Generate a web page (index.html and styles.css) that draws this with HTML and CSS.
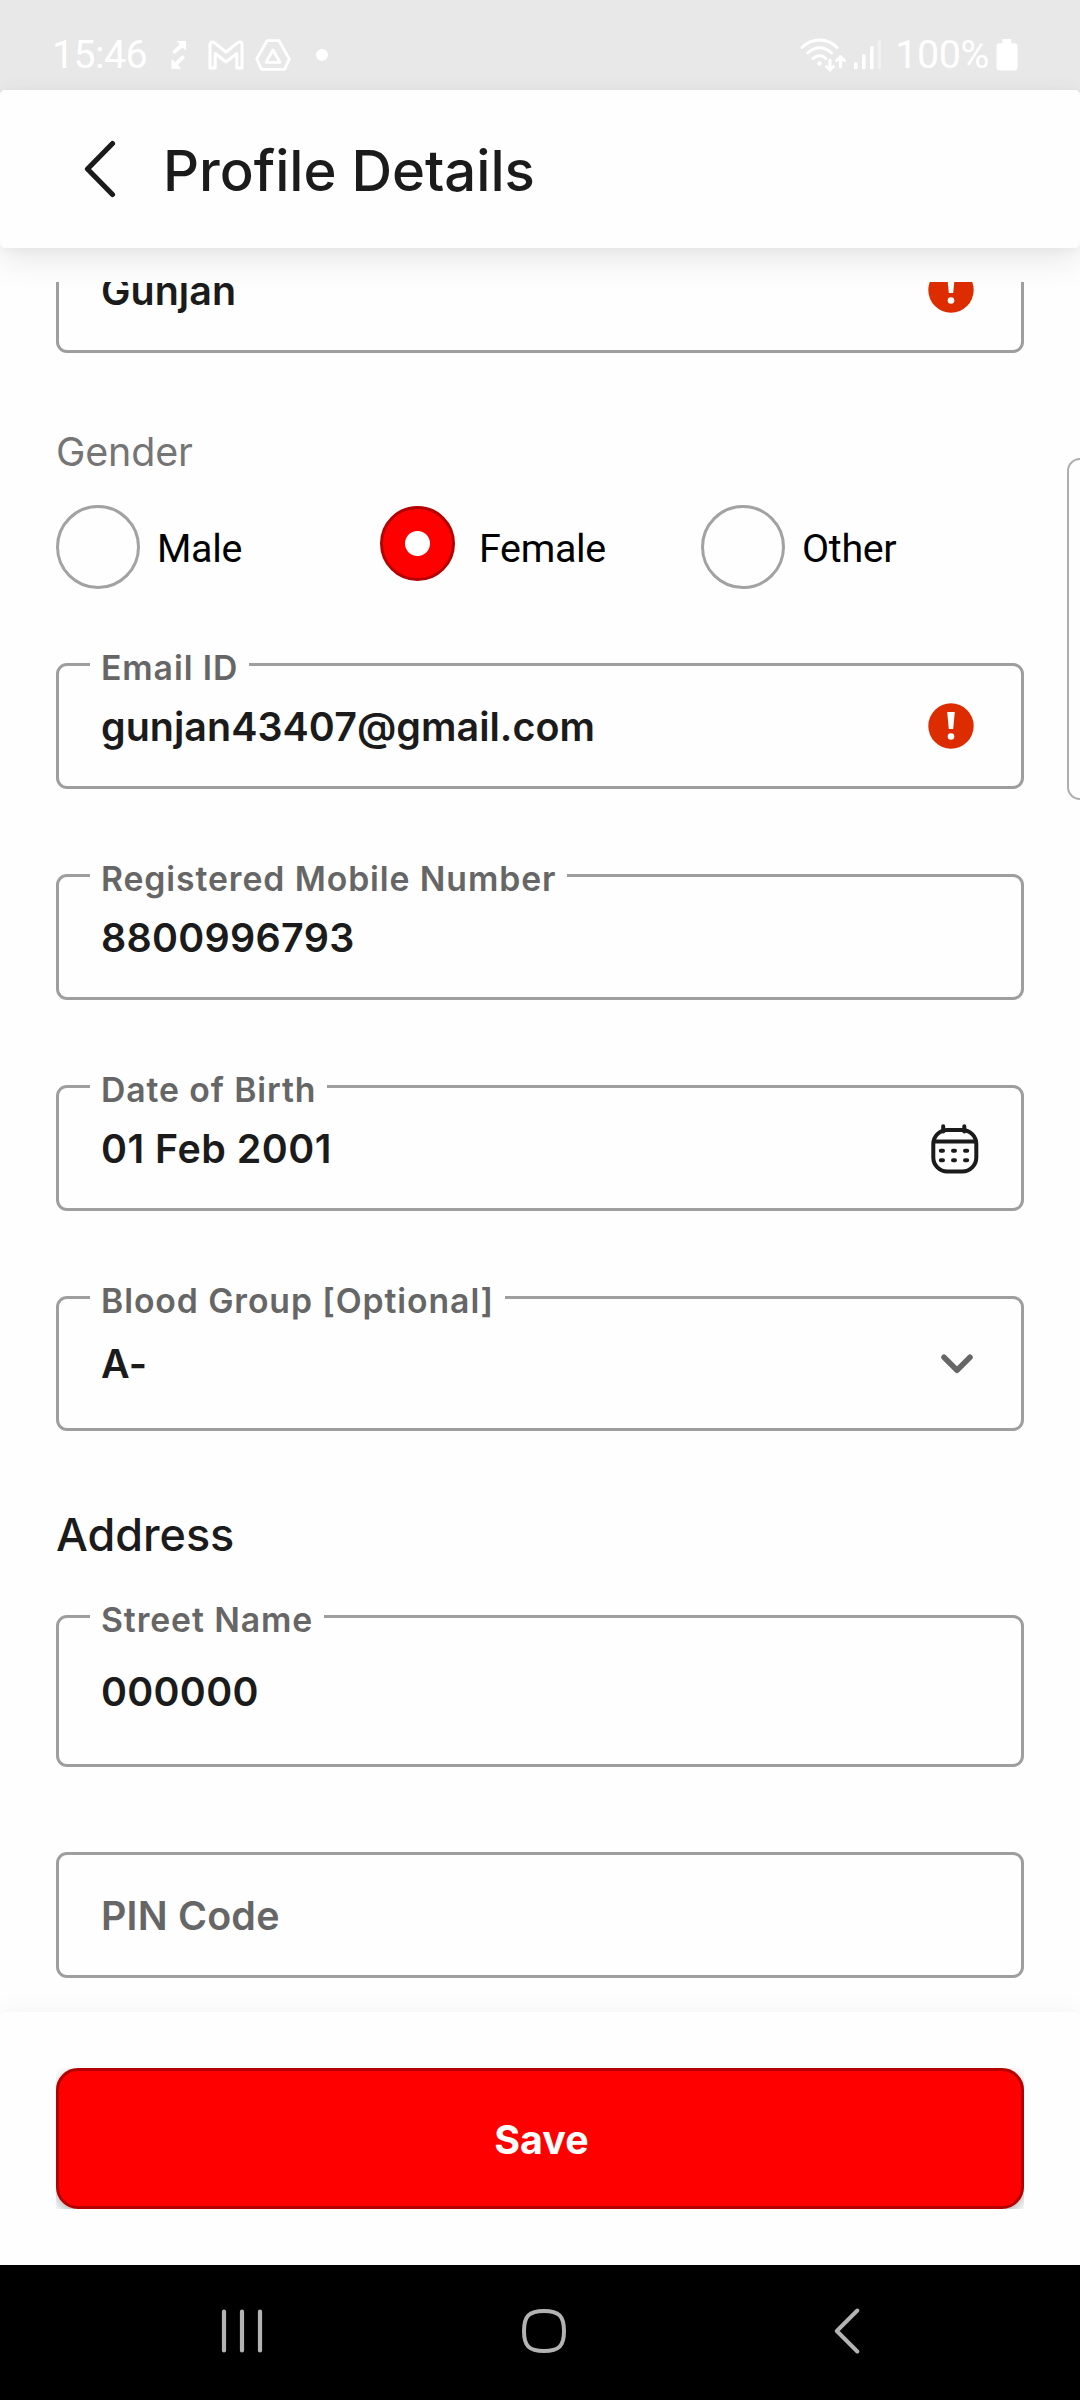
FILE: index.html
```html
<!DOCTYPE html>
<html lang="en">
<head>
<meta charset="utf-8">
<title>Profile Details</title>
<link rel="stylesheet" href="styles.css">
</head>
<body>
<div class="screen">
  <div class="status-bar">
    <div class="status-left">
      <span class="status-text clock">15:46</span>
      <svg class="icon-sync" width="16" height="30" viewBox="0 0 16 30"><path d="M5.500 1H15V10.500L11.700 7.400L3.500 14L1.300 11.800L8.500 4.200Z M12.200 15.500L14 17.500L7 25L10 28.500V29H.5V19L4 22.300L10.800 15.500Z" fill="#fff"/></svg>
      <svg class="icon-mail" width="36" height="30" viewBox="0 0 36 30"><path d="M2 28V4.500C2 1.800 4.500 1.200 6.500 2.800L18 12L29.500 2.800C31.500 1.200 34 1.800 34 4.500V28H28.800V13.500L18 22L7.200 13.500V28Z" fill="none" stroke="#fff" stroke-width="3" stroke-linejoin="round"/></svg>
      <svg class="icon-drive" width="36" height="32" viewBox="0 0 36 32"><path d="M12 1.700H24L34.300 20L29.500 30.300H6.500L1.700 20Z M18 11L25 23.300H11Z" fill="none" stroke="#fff" stroke-width="2.800" stroke-linejoin="round"/></svg>
      <span class="more-dot"></span>
    </div>
    <div class="status-right">
      <svg class="icon-wifi" width="46" height="36" viewBox="0 0 46 36"><g fill="none" stroke="#fff" stroke-width="3" stroke-linecap="round"><path d="M2 10.500C12 .6 27 .6 37 10.500"/><path d="M7.500 16C15 9 24 9 31.500 16"/><path d="M13 21.500C17 17.800 22 17.800 26 21.500"/><path d="M30 23V32.500M26.500 29.500L30 33L33.500 29.500M40.500 30V21M36.500 23.500L40.500 19.700L44.500 23.500"/></g><circle cx="19.500" cy="26.500" r="2.200" fill="#fff"/></svg>
      <svg class="icon-signal" width="28" height="30" viewBox="0 0 28 30"><g fill="#fff"><rect x="0" y="22" width="3.600" height="7.500" rx="1.800"/><rect x="8" y="14" width="3.600" height="15.500" rx="1.800"/><rect x="16" y="6" width="3.600" height="23.500" rx="1.800"/><rect x="23.500" y="0" width="3.600" height="29.500" rx="1.800" opacity=".4"/></g></svg>
      <span class="status-text battery-level">100%</span>
      <svg class="icon-battery" width="22" height="32" viewBox="0 0 22 32"><path d="M6.300 0H15.300V4.300H18.500Q21.500 4.300 21.500 7.500V28.500Q21.500 31.500 18.500 31.500H3.500Q.5 31.500 .5 28.500V7.500Q.5 4.300 3.500 4.300H6.300Z" fill="#fff"/></svg>
    </div>
  </div>

  <header class="app-bar">
    <svg class="icon-back" width="32" height="58" viewBox="0 0 32 58"><path d="M28.500 3.500L3.500 29L28.500 54.500" fill="none" stroke="#1b1b1b" stroke-width="5.200" stroke-linecap="round" stroke-linejoin="round"/></svg>
    <h1 class="title">Profile Details</h1>
  </header>

  <main class="scroller">
    <div class="form">
      <div class="field">
        <span class="value">Gunjan</span>
        <svg class="icon-error" width="46" height="46" viewBox="0 0 46 46"><circle cx="23" cy="23" r="22.700" fill="#dd2c00"/><path d="M19.200 9H26.800L25.200 26H20.800Z" fill="#fff"/><circle cx="23" cy="33.500" r="3.300" fill="#fff"/></svg>
      </div>

      <p class="group-label">Gender</p>
      <div class="radios">
        <label class="option"><span class="radio"></span><span class="option-text">Male</span></label>
        <label class="option option-on"><span class="radio radio-on"></span><span class="option-text">Female</span></label>
        <label class="option"><span class="radio"></span><span class="option-text">Other</span></label>
      </div>

      <div class="field">
        <span class="label">Email ID</span>
        <span class="value">gunjan43407@gmail.com</span>
        <svg class="icon-error" width="46" height="46" viewBox="0 0 46 46"><circle cx="23" cy="23" r="22.700" fill="#dd2c00"/><path d="M19.200 9H26.800L25.200 26H20.800Z" fill="#fff"/><circle cx="23" cy="33.500" r="3.300" fill="#fff"/></svg>
      </div>
      <div class="field spaced">
        <span class="label">Registered Mobile Number</span>
        <span class="value value-number">8800996793</span>
      </div>
      <div class="field spaced">
        <span class="label">Date of Birth</span>
        <span class="value value-date">01 Feb 2001</span>
        <svg class="icon-calendar" width="48" height="50" viewBox="0 0 48 50"><g fill="none" stroke="#1b1b1b" stroke-width="4" stroke-linecap="round"><rect x="2.300" y="6" width="43" height="41.500" rx="14"/><path d="M3 17.500H45M12.200 2.200V7.500M33.300 2.200V7.500"/><path d="M9.800 26.800H12M22 26.800H24M34 26.800H36.200M9.800 36.300H12M22 36.300H24M34 36.300H36.200"/></g></svg>
      </div>
      <div class="field field-select spaced">
        <span class="label">Blood Group [Optional]</span>
        <span class="value value-number">A-</span>
        <svg class="icon-chevron" width="32" height="20" viewBox="0 0 32 20"><path d="M3 3.200L16 16.300L29 3.200" fill="none" stroke="#666" stroke-width="5.500" stroke-linecap="round" stroke-linejoin="round"/></svg>
      </div>

      <h2 class="section">Address</h2>
      <div class="field field-street">
        <span class="label">Street Name</span>
        <span class="value value-number">000000</span>
      </div>
      <div class="field spaced">
        <span class="value value-empty">PIN Code</span>
      </div>
    </div>
  </main>

  <div class="edge-handle"></div>

  <footer class="action-bar">
    <div class="button-clip"><button class="save" type="button">Save</button></div>
  </footer>

  <nav class="nav-bar">
    <svg class="icon-recents" width="42" height="44" viewBox="0 0 42 44"><path d="M3 2.500V41.500M21 2.500V41.500M39 2.500V41.500" stroke="#b3b3b3" stroke-width="4.200" stroke-linecap="round"/></svg>
    <svg class="icon-home" width="44" height="44" viewBox="0 0 44 44"><path d="M22 2C37 2 42 7 42 22S37 42 22 42S2 37 2 22S7 2 22 2Z" fill="none" stroke="#b3b3b3" stroke-width="4"/></svg>
    <svg class="icon-nav-back" width="26" height="46" viewBox="0 0 26 46"><path d="M23.300 2.500L2.800 23L23.300 43.500" fill="none" stroke="#b3b3b3" stroke-width="4" stroke-linecap="round" stroke-linejoin="round"/></svg>
  </nav>
</div>
</body>
</html>
```
FILE: styles.css
```css
* { box-sizing: border-box; }

body {
  margin: 0;
  background: #fefefe;
  color: #1b1b1b;
  font-family: Inter, sans-serif;
}

svg { display: block; flex: none; }

.screen {
  position: relative;
  display: flex;
  flex-direction: column;
  width: 1080px;
  height: 2400px;
  overflow: hidden;
}

.status-bar {
  display: flex;
  justify-content: space-between;
  flex: none;
  height: 95px;
  margin-bottom: -5px;
  padding: 0 62px 0 52px;
  background: #e8e8e8;
}

.status-left,
.status-right {
  display: flex;
  align-items: center;
  height: 110px;
}

.status-text {
  color: #fff;
  font: 400 39.4px/48px Roboto, sans-serif;
}

.clock { letter-spacing: -.6px; }
.battery-level { letter-spacing: -.4px; }

.icon-sync { margin-left: 24px; }
.icon-mail { margin-left: 21px; }
.icon-drive { margin-left: 11px; }

.more-dot {
  width: 12px;
  height: 12px;
  margin-left: 25px;
  border-radius: 50%;
  background: #fff;
}

.icon-signal { margin: 0 13px 0 8px; }
.icon-battery { margin-left: 7px; }

.app-bar {
  display: flex;
  align-items: center;
  flex: none;
  height: 158px;
  padding-left: 84px;
  border-radius: 5px;
  background: #fefefe;
  box-shadow: 0 12px 34px rgba(0, 0, 0, .09), 0 3px 12px rgba(0, 0, 0, .04);
}

.title {
  margin: 4px 0 0 47px;
  font-size: 56.25px;
  font-weight: 500;
  letter-spacing: -.03px;
  line-height: 68px;
}

.scroller {
  flex: none;
  height: 1730px;
  margin-top: 34px;
  padding: 0 56px;
  overflow: hidden;
}

.form { margin-top: -55px; }

.field {
  position: relative;
  display: flex;
  align-items: center;
  justify-content: space-between;
  height: 126px;
  padding: 1px 47px 0 42px;
  border: 3px solid #9e9e9e;
  border-radius: 11px;
}

.spaced { margin-top: 85px; }
.field-select { height: 135px; }
.field-street { height: 152px; }

.label {
  position: absolute;
  top: -18px;
  left: 31px;
  padding: 0 11px;
  background: #fefefe;
  color: #666;
  font-size: 33.75px;
  font-weight: 600;
  letter-spacing: .9px;
  line-height: 40px;
}

.value {
  font-size: 39.4px;
  font-weight: 600;
  letter-spacing: .05px;
  line-height: 48px;
}

.value-number { letter-spacing: .3px; }
.value-date { letter-spacing: .5px; }

.value-empty {
  color: #666;
  letter-spacing: .2px;
}

.icon-error { margin-top: -1px; }
.icon-calendar { margin-right: -5px; }
.icon-chevron { margin-right: 1px; }

.group-label {
  margin: 75px 0 29px;
  color: #757575;
  font-size: 39.4px;
  letter-spacing: -.15px;
  line-height: 48px;
}

.radios {
  display: grid;
  grid-template-columns: 324px 321px 1fr;
  height: 84px;
  margin-bottom: 74px;
}

.option {
  display: flex;
  align-items: flex-start;
  gap: 17px;
}

.option-on { gap: 24px; }

.radio {
  width: 84px;
  height: 84px;
  border: 3px solid #a2a2a2;
  border-radius: 50%;
}

.radio-on {
  width: 75px;
  height: 75px;
  margin-top: 1px;
  border-color: #b50000;
  background: radial-gradient(circle, #fff 12px, #f00 13px);
}

.option-text {
  padding-top: 2px;
  color: #000;
  font: 400 39.4px/84px Roboto, sans-serif;
  letter-spacing: -.3px;
}

.section {
  margin: 77px 0 53px;
  font-size: 45px;
  font-weight: 500;
  letter-spacing: -.05px;
  line-height: 54px;
}

.edge-handle {
  position: absolute;
  top: 458px;
  left: 1067px;
  width: 40px;
  height: 342px;
  border: 2px solid #aeaeae;
  border-radius: 13px;
}

.action-bar {
  flex: none;
  height: 253px;
  padding: 56px;
  border-radius: 5px;
  background: #fefefe;
  box-shadow: 0 0 26px rgba(0, 0, 0, .05);
}

.button-clip {
  height: 141px;
  overflow: hidden;
}

.save {
  display: block;
  width: 100%;
  height: 141px;
  padding: 3px 0 0 3px;
  border: 3px solid #b50000;
  border-radius: 22px;
  background: #f00;
  box-shadow: 0 4px 12px rgba(0, 0, 0, .3);
  color: #fff;
  font: 700 39.4px/48px Inter, sans-serif;
}

.nav-bar {
  display: flex;
  align-items: center;
  flex: none;
  height: 135px;
  padding: 0 0 3px 221px;
  background: #000;
}

.icon-home { margin-left: 259px; }
.icon-nav-back { margin-left: 268px; }
```
